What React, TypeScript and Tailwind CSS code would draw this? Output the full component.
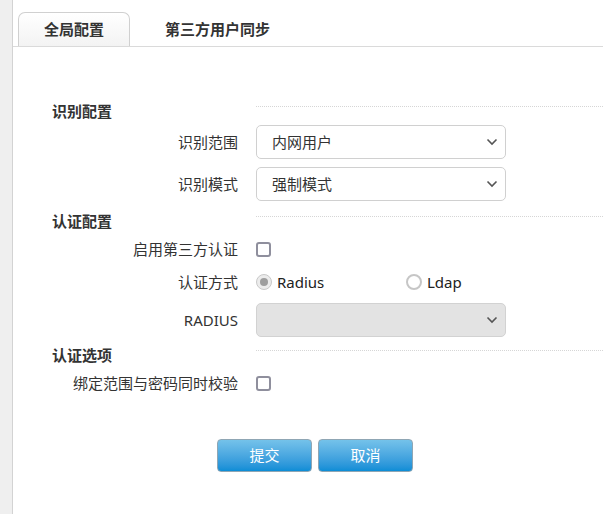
const font = { fontFamily: '"Noto Sans", "Noto Sans CJK SC", sans-serif' };

function Chevron() {
  return (
    <svg width="12" height="8" viewBox="0 0 12 8" className="shrink-0">
      <path d="M1.5 1.5 L6 6 L10.5 1.5" fill="none" stroke="#555" strokeWidth="1.6" />
    </svg>
  );
}

function SelectBox({ value, disabled }: { value?: string; disabled?: boolean }) {
  return (
    <div
      className={`w-[250px] h-[34px] border rounded-[5px] pl-[15px] pr-[7px] flex items-center justify-between text-[15px] text-[#333] ${
        disabled ? "bg-[#e3e3e3] border-[#d2d2d2]" : "bg-white border-[#d0d0d0]"
      }`}
    >
      <span>{value}</span>
      <Chevron />
    </div>
  );
}

function SectionTitle({ title, className = "" }: { title: string; className?: string }) {
  return (
    <div className={`flex h-[18px] ${className}`}>
      <div className="w-[243px] pl-[39px] leading-[18px] text-[15px] font-bold text-[#333]">{title}</div>
      <div className="flex-1 mt-[4px] border-t border-dotted border-[#d6d6d6]" />
    </div>
  );
}

function Row({ label, children, className = "" }: { label: string; children: React.ReactNode; className?: string }) {
  return (
    <div className={`flex items-center ${className}`}>
      <div className="w-[225px] text-right text-[15px] text-[#333] leading-[20px]">{label}</div>
      <div className="ml-[18px] flex items-center">{children}</div>
    </div>
  );
}

function Checkbox() {
  return <div className="w-[15px] h-[15px] border-2 border-[#8f8f9d] rounded-[3px] bg-white" />;
}

function Radio({ checked, label }: { checked?: boolean; label: string }) {
  return (
    <div className="flex items-center">
      {checked ? (
        <div className="w-[16px] h-[16px] rounded-full border border-[#c9c9c9] bg-[#ececec] flex items-center justify-center">
          <div className="w-[8px] h-[8px] rounded-full bg-[#9e9e9e]" />
        </div>
      ) : (
        <div className="w-[16px] h-[16px] rounded-full border-2 border-[#c6c6c6] bg-white" />
      )}
      <span className="ml-[5px] text-[15px] text-[#222] leading-[20px]">{label}</span>
    </div>
  );
}

function Button({ text }: { text: string }) {
  return (
    <button className="w-[95px] h-[33px] rounded-[4px] border border-[#8fa6b4] bg-gradient-to-b from-[#74c2ea] to-[#0a8dd6] text-white text-[15px]">
      {text}
    </button>
  );
}

export default function App() {
  return (
    <div className="flex h-[514px] w-[603px] bg-white overflow-hidden" style={font}>
      <div className="w-[13px] bg-[#efefef] border-r border-[#d3d3d3]" />
      <div className="flex-1">
        <div className="h-[47px] border-b border-[#dadada] flex items-end pl-[5px]">
          <div className="w-[112px] h-[34px] border border-b-0 border-[#d0d0d0] rounded-t-[7px] bg-gradient-to-b from-white to-[#f3f3f3] flex items-center justify-center text-[15px] font-bold text-[#333]">
            全局配置
          </div>
          <div className="h-[34px] pl-[35px] flex items-center text-[15px] font-bold text-[#333]">第三方用户同步</div>
        </div>

        <div className="pt-[55px]">
          <SectionTitle title="识别配置" />
          <Row label="识别范围" className="mt-[5px]">
            <SelectBox value="内网用户" />
          </Row>
          <Row label="识别模式" className="mt-[8px]">
            <SelectBox value="强制模式" />
          </Row>

          <SectionTitle title="认证配置" className="mt-[11px]" />
          <Row label="启用第三方认证" className="mt-[4px] h-[30px]">
            <Checkbox />
          </Row>
          <Row label="认证方式" className="mt-[3px] h-[30px]">
            <div className="w-[150px]">
              <Radio checked label="Radius" />
            </div>
            <Radio label="Ldap" />
          </Row>
          <Row label="RADIUS" className="mt-[6px]">
            <SelectBox disabled />
          </Row>

          <SectionTitle title="认证选项" className="mt-[9px]" />
          <Row label="绑定范围与密码同时校验" className="mt-[4px] h-[30px]">
            <Checkbox />
          </Row>

          <div className="mt-[41px] pl-[204px] flex gap-[6px]">
            <Button text="提交" />
            <Button text="取消" />
          </div>
        </div>
      </div>
    </div>
  );
}
